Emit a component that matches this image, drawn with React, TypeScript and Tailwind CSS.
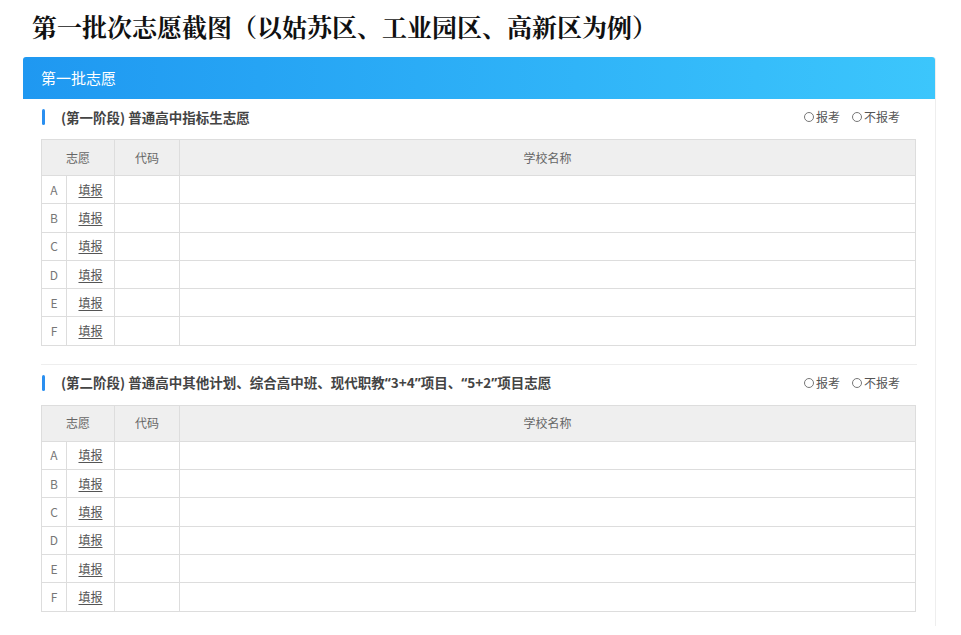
import React from "react";

const sans = { fontFamily: '"Noto Sans CJK SC", "Noto Sans", sans-serif' };

const rows = ["A", "B", "C", "D", "E", "F"];

function Radios() {
  return (
    <div className="flex items-center gap-[12px] text-[12px] text-[#555]">
      {["报考", "不报考"].map((t) => (
        <label key={t} className="flex items-center gap-[2px]">
          <span className="inline-block h-[10px] w-[10px] rounded-full border border-[#777] bg-white" />
          <span>{t}</span>
        </label>
      ))}
    </div>
  );
}

function Q({ children }: { children: React.ReactNode }) {
  return <span style={{ fontFamily: '"Noto Sans", sans-serif' }}>{children}</span>;
}

function Section({ title, last }: { title: React.ReactNode; last?: boolean }) {
  return (
    <div className={last ? "pb-[14px]" : "border-b border-[#eee] pb-[18px]"}>
      <div className="flex h-[36px] items-center justify-between pr-[17px]">
        <div className="flex items-center">
          <span className="mr-[16px] ml-[1px] inline-block h-[16px] w-[3px] rounded-sm bg-[#2a8ff0]" />
          <span className="text-[13.5px] font-bold text-[#444]">{title}</span>
        </div>
        <Radios />
      </div>
      <table className="mt-[4px] w-[875px] border-collapse text-[12px] text-[#555]">
        <thead>
          <tr className="h-[36px] bg-[#efefef] text-[#666]">
            <th colSpan={2} className="w-[73px] border border-[#ddd] font-normal">志愿</th>
            <th className="w-[65px] border border-[#ddd] font-normal">代码</th>
            <th className="border border-[#ddd] font-normal">学校名称</th>
          </tr>
        </thead>
        <tbody>
          {rows.map((r) => (
            <tr key={r} className="h-[28.3px]">
              <td className="w-[25px] border border-[#ddd] text-center text-[#777]">{r}</td>
              <td className="w-[48px] border border-[#ddd] text-center">
                <span className="underline underline-offset-2">填报</span>
              </td>
              <td className="border border-[#ddd]" />
              <td className="border border-[#ddd]" />
            </tr>
          ))}
        </tbody>
      </table>
    </div>
  );
}

export default function App() {
  return (
    <div className="h-[635px] w-[961px] overflow-hidden bg-white" style={sans}>
      <h1
        className="pl-[32px] pt-[10px] text-[25px] leading-[32px] font-bold text-[#111]"
        style={{ fontFamily: '"Noto Serif CJK SC", "Liberation Serif", "Noto Sans CJK SC", serif' }}
      >
        第一批次志愿截图（以姑苏区、工业园区、高新区为例）
      </h1>
      <div className="mt-[15px] ml-[23px] w-[913px] rounded-t-[3px] border-r border-[#eee]">
        <div className="flex h-[42px] items-center rounded-t-[3px] bg-gradient-to-r from-[#1f98f1] to-[#3cc6fc] pl-[18px] text-[15px] text-white">
          第一批志愿
        </div>
        <div className="px-[18px]">
          <Section title="(第一阶段) 普通高中指标生志愿" />
          <Section
            title={
              <>
                (第二阶段) 普通高中其他计划、综合高中班、现代职教<Q>“</Q>3+4<Q>”</Q>项目、<Q>“</Q>5+2<Q>”</Q>项目志愿
              </>
            }
            last
          />
        </div>
      </div>
    </div>
  );
}
